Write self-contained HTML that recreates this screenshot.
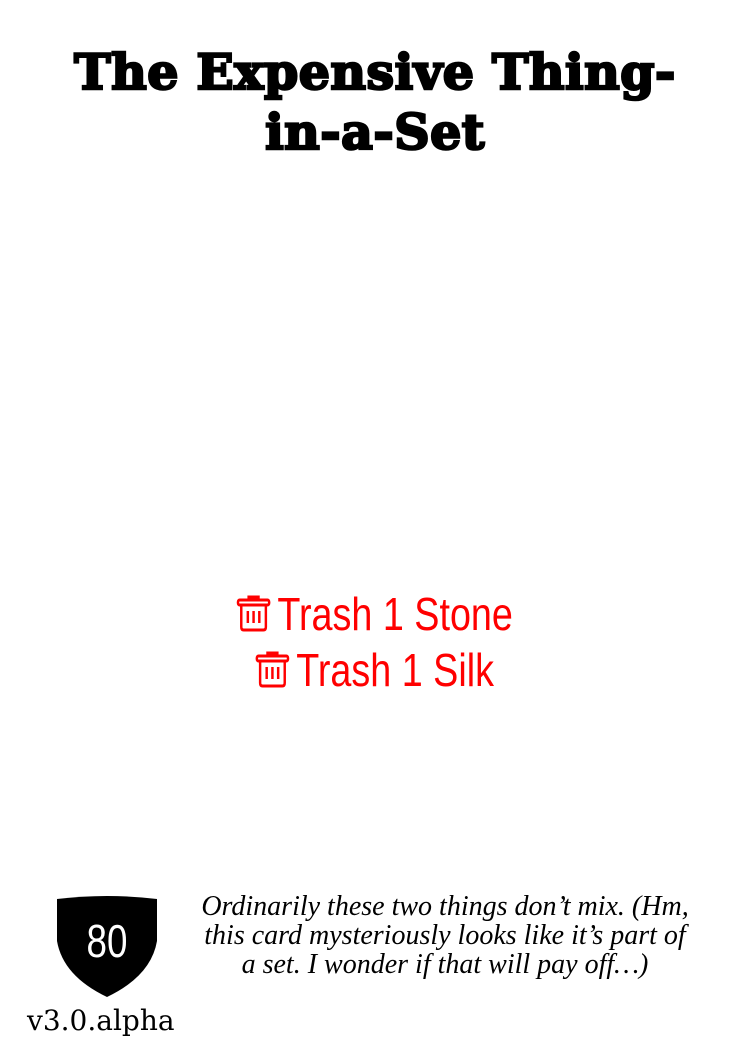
<!DOCTYPE html>
<html><head><meta charset="utf-8"><style>
body{margin:0;width:750px;height:1050px;background:#fff;position:relative;overflow:hidden}
.title{position:absolute;top:42px;left:0;width:750px;text-align:center;font-family:"DejaVu Serif","Liberation Serif",serif;font-weight:900;font-size:49px;line-height:60px;color:#000;-webkit-text-stroke:2.5px #000;letter-spacing:0.5px}
.red{position:absolute;left:0;width:750px;text-align:center;color:#f00;font-family:"Liberation Sans",sans-serif;font-size:46px;line-height:50px}
.red span{display:inline-block;transform:scaleX(0.82);white-space:nowrap}
.red svg{vertical-align:-2px;margin-right:8px}
.flav{position:absolute;left:180px;width:530px;top:892px;text-align:center;font-family:"Liberation Serif",serif;font-style:italic;font-size:28px;line-height:29px;white-space:nowrap}
.ver{position:absolute;left:27px;top:1004px;font-family:"DejaVu Serif","Liberation Serif",serif;font-size:28px}
</style></head><body>
<div class="title">The Expensive Thing-<br>in-a-Set</div>
<div class="red" style="top:589px"><span><svg width="42" height="38" viewBox="0 0 42 38"><g fill="none" stroke="#f00" stroke-width="3"><rect x="2" y="6" width="38" height="5" rx="2"/><path d="M15 6V3h12v3"/><path d="M6 11v22q0 3 3 3h24q3 0 3-3V11"/><path d="M14 17v12M21 17v12M28 17v12"/></g></svg>Trash 1 Stone</span></div>
<div class="red" style="top:645px"><span><svg width="42" height="38" viewBox="0 0 42 38"><g fill="none" stroke="#f00" stroke-width="3"><rect x="2" y="6" width="38" height="5" rx="2"/><path d="M15 6V3h12v3"/><path d="M6 11v22q0 3 3 3h24q3 0 3-3V11"/><path d="M14 17v12M21 17v12M28 17v12"/></g></svg>Trash 1 Silk</span></div>
<svg style="position:absolute;left:56px;top:896px" width="102" height="102" viewBox="0 0 102 102"><path d="M1 3Q51 -3 101 3V45Q95 80 51 101Q7 80 1 45Z" fill="#000"/><text x="51" y="61" text-anchor="middle" fill="#fff" font-family="Liberation Sans,sans-serif" font-size="46" transform="translate(51 0) scale(0.8 1) translate(-51 0)">80</text></svg>
<div class="flav">Ordinarily these two things don’t mix. (Hm,<br>this card mysteriously looks like it’s part of<br>a set. I wonder if that will pay off…)</div>
<div class="ver">v3.0.alpha</div>
</body></html>
